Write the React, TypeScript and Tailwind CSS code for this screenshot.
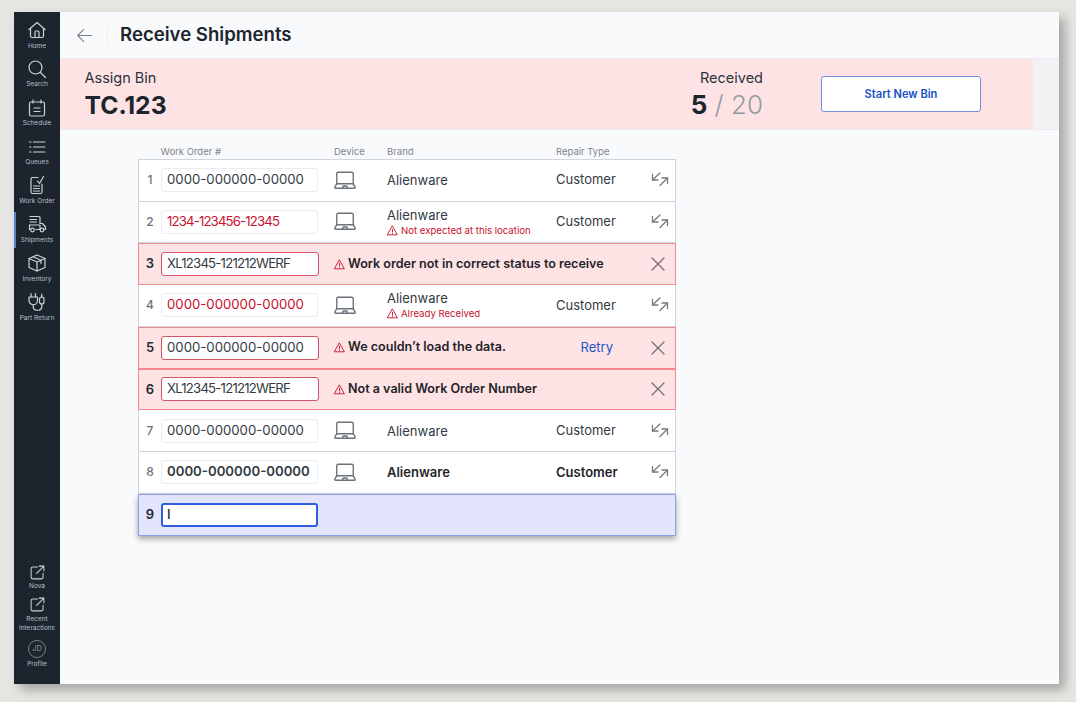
import type { ReactNode } from "react";

const INK = "#ccd1d7";

function NavSvg({ children, size = 20 }: { children: ReactNode; size?: number }) {
  return (
    <svg width={size} height={size} viewBox="0 0 20 20" fill="none" stroke={INK} strokeWidth="1.200" strokeLinecap="round" strokeLinejoin="round">
      {children}
    </svg>
  );
}

const NAV = [
  { label: "Home", icon: <><path d="M2 9.500 10 2.500l8 7" /><path d="M3.500 8.500V16a1.500 1.500 0 0 0 1.500 1.500h10a1.500 1.500 0 0 0 1.500-1.500V8.500" /><path d="M8 17.500V12a1 1 0 0 1 1-1h2a1 1 0 0 1 1 1v5.500" /></> },
  { label: "Search", icon: <><circle cx="8.500" cy="8.500" r="6.500" /><path d="m13.500 13.500 5 5" /></> },
  { label: "Schedule", icon: <><rect x="2.500" y="4" width="15" height="14" rx="1.500" /><path d="M6 2v3M14 2v3M7 10h6M7 13.500h6" /></> },
  { label: "Queues", icon: <><path d="M6.500 5H18M6.500 10H18M6.500 15H18" /><path d="M2.500 5h1.500M2.500 10h1.500M2.500 15h1.500" /></> },
  { label: "Work Order", icon: <><path d="M11 2.500H5.500A1.500 1.500 0 0 0 4 4v13a1.500 1.500 0 0 0 1.500 1.500h8A1.500 1.500 0 0 0 15 17V9" /><path d="m10.500 6 2 2.500L16.500 1.500" /><path d="M6.500 11h6M6.500 13.500h6M6.500 16h6" /></> },
  { label: "Shipments", active: true, icon: <><path d="M3 2.500h9a1 1 0 0 1 1 1V9" /><path d="M3 5.500h6.500M3 8h6.500" /><path d="M13 9.500h2.500l3 3.500v2.500h-1.500" /><path d="M2.500 11H13v4.500H9" /><path d="M2.500 11v4.500h1" /><circle cx="5.500" cy="16" r="1.800" /><circle cx="15" cy="16" r="1.800" /></> },
  { label: "Inventory", icon: <><path d="M10 2 2 5.500v9L10 18l8-3.500v-9z" /><path d="M2 5.500 10 9l8-3.500M10 9v9" /><path d="M6 3.800 14 7.300v3" /></> },
  { label: "Part Return", icon: <><path d="M4 1.500v3.500M8.500 1.500v3.500" /><path d="M2 5h8.500v3.500a4.250 4.250 0 0 1-8.500 0z" /><path d="M6.250 12.750V15a3.250 3.250 0 0 0 3.250 3.250h2a3.250 3.250 0 0 0 3.250-3.250v-3" /><rect x="12.500" y="5" width="4.500" height="7" rx="2.250" /><path d="M14.750 2v3" /></> },
];

function ExternalIcon() {
  return (
    <NavSvg size={17}>
      <path d="M10 3.500H4.500a2 2 0 0 0-2 2v10a2 2 0 0 0 2 2h10a2 2 0 0 0 2-2V11" />
      <path d="M9 11 17 3M12 2.500h5.500V8" />
    </NavSvg>
  );
}

function NavItem({ label, icon, active }: { label: string; icon: ReactNode; active?: boolean }) {
  return (
    <div className="relative flex h-[38.860px] flex-col items-center justify-start pt-[7px]">
      {active && <div className="absolute left-0 top-[5px] h-[36px] w-[2px] bg-[#5b7fd4]" />}
      {icon}
      <span className="mt-[1.500px] whitespace-nowrap text-[6.500px] leading-[9px] text-[#b9bfc6]">{label}</span>
    </div>
  );
}

function Sidebar() {
  return (
    <aside className="flex w-[46px] shrink-0 flex-col bg-[#1c252e]">
      <div className="flex flex-col pt-[1px]">
        {NAV.map((n) => (
          <NavItem key={n.label} label={n.label} active={n.active} icon={<NavSvg>{n.icon}</NavSvg>} />
        ))}
      </div>
      <div className="mt-auto flex flex-col items-center pb-[15px]">
        <ExternalIcon />
        <span className="mt-[1px] text-[6.500px] leading-[9px] text-[#b9bfc6]">Nova</span>
        <div className="mt-[5px] flex">
          <ExternalIcon />
        </div>
        <span className="mt-[2px] text-center text-[6.500px] leading-[9px] text-[#b9bfc6]">
          Recent
          <br />
          Interactions
        </span>
        <div className="mt-[7px] flex h-[18px] w-[18px] items-center justify-center rounded-full border border-[#767e86] text-[7.500px] text-[#8d959d]">
          JD
        </div>
        <span className="mt-[2px] text-[6.500px] leading-[9px] text-[#b9bfc6]">Profile</span>
      </div>
    </aside>
  );
}

function Laptop() {
  return (
    <svg width="22" height="19" viewBox="0 0 24 20" fill="none" stroke="#6b727a" strokeWidth="1.500" strokeLinejoin="round" strokeLinecap="round">
      <path d="M3 14V2.500A1.500 1.500 0 0 1 4.500 1h15A1.500 1.500 0 0 1 21 2.500V14" />
      <path d="M3 13.500h18l2 3.500a1 1 0 0 1-1 1.500H2a1 1 0 0 1-1-1.500z" />
      <path d="M9.500 18.500V17a1 1 0 0 1 1-1h3a1 1 0 0 1 1 1v1.500" />
    </svg>
  );
}

function Swap() {
  return (
    <svg width="18" height="16" viewBox="0 0 18 16" fill="none" stroke="#73797f" strokeWidth="1.300" strokeLinecap="round" strokeLinejoin="round">
      <path d="M1.500 2.500V8H7" />
      <path d="M1.500 8 9 1" />
      <path d="M11 6h5.500v5.500" />
      <path d="M16.500 6 9 13.500" />
    </svg>
  );
}

function Close() {
  return (
    <svg width="14" height="14" viewBox="0 0 14 14" fill="none" stroke="#6f6f75" strokeWidth="1.200" strokeLinecap="round">
      <path d="M1 1l12 12M13 1 1 13" />
    </svg>
  );
}

function Warn({ size = 11 }: { size?: number }) {
  return (
    <svg width={size} height={size} viewBox="0 0 12 12" fill="none" stroke="#c8102e" strokeWidth="1" strokeLinejoin="round" strokeLinecap="round" className="shrink-0">
      <path d="M6 1.300 11.300 10.700H.7z" />
      <path d="M6 4.700v3M6 9.100v.1" />
    </svg>
  );
}

type Row =
  | { n: number; kind: "ok"; value: string; red?: boolean; bold?: boolean; narrow?: boolean; note?: string }
  | { n: number; kind: "error"; value: string; narrow?: boolean; message: string; retry?: boolean }
  | { n: number; kind: "active" };

const ROWS: Row[] = [
  { n: 1, kind: "ok", value: "0000-000000-00000" },
  { n: 2, kind: "ok", value: "1234-123456-12345", red: true, narrow: true, note: "Not expected at this location" },
  { n: 3, kind: "error", value: "XL12345-121212WERF", narrow: true, message: "Work order not in correct status to receive" },
  { n: 4, kind: "ok", value: "0000-000000-00000", red: true, note: "Already Received" },
  { n: 5, kind: "error", value: "0000-000000-00000", message: "We couldn’t load the data.", retry: true },
  { n: 6, kind: "error", value: "XL12345-121212WERF", narrow: true, message: "Not a valid Work Order Number" },
  { n: 7, kind: "ok", value: "0000-000000-00000" },
  { n: 8, kind: "ok", value: "0000-000000-00000", bold: true },
  { n: 9, kind: "active" },
];

function TableRow({ row }: { row: Row }) {
  if (row.kind === "active") {
    return (
      <div className="relative flex h-[41.750px] items-center border border-[#8f9fea] bg-[#e2e5fb] shadow-[0_3px_6px_rgba(0,0,0,0.35)]">
        <span className="w-[22px] text-center text-[13px] font-semibold text-[#1f2933]">{row.n}</span>
        <div className="flex h-[24px] w-[157px] items-center rounded-[3px] border-2 border-[#2f5fe0] bg-white px-[4px] text-[13.200px] font-medium text-[#22282f]">I</div>
      </div>
    );
  }
  if (row.kind === "error") {
    return (
      <div className="flex h-[41.750px] items-center border border-[#f08a90] bg-[#fee3e5]">
        <span className="w-[22px] text-center text-[13px] font-semibold text-[#1f2933]">{row.n}</span>
        <div className={`flex h-[24px] w-[158px] items-center whitespace-nowrap rounded-[3px] border border-[#d0566a] bg-white px-[5px] text-[13.200px] text-[#333a42] ${row.narrow ? "tracking-[-0.800px]" : ""}`}>{row.value}</div>
        <div className="ml-[15px] flex flex-1 items-center gap-[3px]">
          <Warn />
          <span className="whitespace-nowrap text-[12.550px] font-semibold text-[#1f2429]">{row.message}</span>
        </div>
        {row.retry && <span className="mr-[38px] text-[13px] text-[#1d55c4]">Retry</span>}
        <div className="mr-[10px] flex w-[14px] items-center justify-center">
          <Close />
        </div>
      </div>
    );
  }
  return (
    <div className="flex h-[41.750px] items-center border-x border-b border-[#cfd4de] bg-white">
      <span className="w-[22px] text-center text-[12px] font-medium text-[#6b727a]">{row.n}</span>
      <div className={`flex h-[24px] w-[157px] items-center whitespace-nowrap rounded-[3px] border border-[#e9ecf3] bg-white px-[5px] text-[13.200px] ${row.narrow ? "tracking-[-0.850px]" : ""} ${row.red ? "text-[#c8102e]" : "text-[#333a42]"} ${row.bold ? "font-semibold text-[#1f2429]" : ""}`}>{row.value}</div>
      <div className="ml-[16px] flex w-[53px] shrink-0 items-center">
        <Laptop />
      </div>
      <div className="flex w-[169px] shrink-0 flex-col">
        <span className={`text-[13px] leading-[16px] ${row.bold ? "font-semibold text-[#1f2429]" : "text-[#333a42]"}`}>Alienware</span>
        {row.note && (
          <span className="mt-[1px] flex items-center gap-[3px] whitespace-nowrap text-[9.600px] leading-[13px] text-[#c8102e]">
            <Warn />
            {row.note}
          </span>
        )}
      </div>
      <span className={`w-[95px] shrink-0 text-[13px] ${row.bold ? "font-semibold text-[#1f2429]" : "text-[#333a42]"}`}>Customer</span>
      <Swap />
    </div>
  );
}

export default function App() {
  return (
    <div className="h-[702px] w-[1076px] overflow-hidden bg-[#e5e5e2] pl-[14px] pt-[12px] font-['Inter',sans-serif]">
      <div className="flex h-[672px] w-[1045px] bg-[#f9fafc] shadow-[6px_6px_10px_rgba(0,0,0,0.28)]">
        <Sidebar />
        <main className="flex min-w-0 flex-1 flex-col">
          <header className="flex h-[47px] shrink-0 items-center border-b border-[#e9ebf0] pl-[17px]">
            <svg width="15" height="13" viewBox="0 0 15 13" fill="none" stroke="#7a8087" strokeWidth="1.100" strokeLinecap="round" strokeLinejoin="round">
              <path d="M14.500 6.500H.7M6.500.7.7 6.500l5.800 5.800" />
            </svg>
            <div className="ml-[15px] h-[19px] w-px bg-[#eceef2]" />
            <h1 className="ml-[12px] text-[18.600px] font-semibold text-[#1c252e]">Receive Shipments</h1>
          </header>
          <section className="flex h-[71px] shrink-0 border-b border-[#e9ebf0] bg-[#f1f2f4]">
            <div className="flex w-[973px] items-center bg-[#fee3e5] pl-[24.500px]">
              <div className="mt-[2px] w-[548.500px]">
                <div className="text-[14.500px] leading-[20px] text-[#2b333b]">Assign Bin</div>
                <div className="text-[24.700px] font-bold leading-[34px] text-[#1c252e]">TC.123</div>
              </div>
              <div className="mt-[2px] w-[130px] pl-[11px] text-right">
                <div className="text-[14.500px] leading-[20px] text-[#2b333b]">Received</div>
                <div className="text-[26px] font-light leading-[34px] text-[#939aa2]">
                  <span className="font-bold text-[#1c252e]">5</span> / 20
                </div>
              </div>
              <button className="ml-[58px] h-[36px] w-[160px] rounded-[3px] border border-[#6f8fdc] bg-white text-[11.100px] font-semibold text-[#1450c8]">
                Start New Bin
              </button>
            </div>
          </section>
          <div className="ml-[78px] w-[538px] pt-[14px]">
            <div className="flex h-[14.750px] text-[9.500px] leading-[15px] text-[#7d848c]">
              <span className="ml-[22.500px] w-[173.500px]">Work Order #</span>
              <span className="w-[53px]">Device</span>
              <span className="w-[169px]">Brand</span>
              <span>Repair Type</span>
            </div>
            <div className="border-t border-[#cfd4de]">
              {ROWS.map((r) => (
                <TableRow key={r.n} row={r} />
              ))}
            </div>
          </div>
        </main>
      </div>
    </div>
  );
}
